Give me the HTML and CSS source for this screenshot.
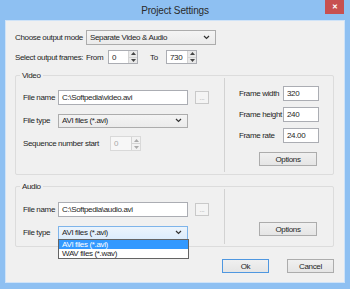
FILE: index.html
```html
<!DOCTYPE html>
<html lang="en">
<head>
    <meta charset="UTF-8">
    <title>Project Settings</title>
    <link rel="stylesheet" href="styles.css">
</head>
<body>
    <div class="window">
        <div class="titlebar">
            <span class="title">Project Settings</span>
            <span class="close">&#x2715;</span>
        </div>

        <div class="client">
            <div class="row mode-row">
                <span class="lbl lbl-main">Choose output mode</span>
                <div class="select mode-select">
                    <span>Separate Video &amp; Audio</span>
                    <svg class="chev" width="7" height="5" viewBox="0 0 7 5"><polyline points="1,1 3.5,3.5 6,1" fill="none" stroke="#333" stroke-width="1.2"/></svg>
                </div>
            </div>

            <div class="row frames-row">
                <span class="lbl lbl-main">Select output frames:</span>
                <span class="lbl lbl-from">From</span>
                <div class="spin">
                    <span class="spin-val">0</span>
                    <span class="spin-btns">
                        <span class="arrow"><svg width="5" height="3" viewBox="0 0 5 3"><polygon points="0,3 2.5,0 5,3" fill="#444"/></svg></span>
                        <span class="arrow"><svg width="5" height="3" viewBox="0 0 5 3"><polygon points="0,0 2.5,3 5,0" fill="#444"/></svg></span>
                    </span>
                </div>
                <span class="lbl lbl-to">To</span>
                <div class="spin">
                    <span class="spin-val">730</span>
                    <span class="spin-btns">
                        <span class="arrow"><svg width="5" height="3" viewBox="0 0 5 3"><polygon points="0,3 2.5,0 5,3" fill="#444"/></svg></span>
                        <span class="arrow"><svg width="5" height="3" viewBox="0 0 5 3"><polygon points="0,0 2.5,3 5,0" fill="#444"/></svg></span>
                    </span>
                </div>
            </div>

            <!-- Video group -->
            <div class="group video-group">
                <span class="group-title">Video</span>
                <div class="group-left">
                    <div class="row">
                        <span class="lbl lbl-file">File name</span>
                        <div class="field file-field">C:\Softpedia\video.avi</div>
                        <span class="browse">...</span>
                    </div>
                    <div class="row">
                        <span class="lbl lbl-file">File type</span>
                        <div class="select file-field">
                            <span>AVI files (*.avi)</span>
                            <svg class="chev" width="7" height="5" viewBox="0 0 7 5"><polyline points="1,1 3.5,3.5 6,1" fill="none" stroke="#333" stroke-width="1.2"/></svg>
                        </div>
                    </div>
                    <div class="row">
                        <span class="lbl lbl-seq">Sequence number start</span>
                        <div class="spin disabled">
                            <span class="spin-val">0</span>
                            <span class="spin-btns">
                                <span class="arrow"><svg width="5" height="3" viewBox="0 0 5 3"><polygon points="0,3 2.5,0 5,3" fill="#aaa"/></svg></span>
                                <span class="arrow"><svg width="5" height="3" viewBox="0 0 5 3"><polygon points="0,0 2.5,3 5,0" fill="#aaa"/></svg></span>
                            </span>
                        </div>
                    </div>
                </div>
                <div class="group-right">
                    <div class="row">
                        <span class="lbl lbl-frame">Frame width</span>
                        <div class="field num-field">320</div>
                    </div>
                    <div class="row">
                        <span class="lbl lbl-frame">Frame height</span>
                        <div class="field num-field">240</div>
                    </div>
                    <div class="row">
                        <span class="lbl lbl-frame">Frame rate</span>
                        <div class="field num-field">24.00</div>
                    </div>
                    <div class="btn options-btn">Options</div>
                </div>
            </div>

            <!-- Audio group -->
            <div class="group audio-group">
                <span class="group-title">Audio</span>
                <div class="group-left">
                    <div class="row">
                        <span class="lbl lbl-file">File name</span>
                        <div class="field file-field">C:\Softpedia\audio.avi</div>
                        <span class="browse">...</span>
                    </div>
                    <div class="row">
                        <span class="lbl lbl-file">File type</span>
                        <div class="select file-field focused">
                            <span>AVI files (*.avi)</span>
                            <svg class="chev" width="7" height="5" viewBox="0 0 7 5"><polyline points="1,1 3.5,3.5 6,1" fill="none" stroke="#333" stroke-width="1.2"/></svg>
                            <div class="droplist">
                                <div class="drop-item selected">AVI files (*.avi)</div>
                                <div class="drop-item">WAV files (*.wav)</div>
                            </div>
                        </div>
                    </div>
                </div>
                <div class="group-right">
                    <div class="btn options-btn">Options</div>
                </div>
            </div>

            <div class="actions">
                <div class="btn default-btn">Ok</div>
                <div class="btn">Cancel</div>
            </div>
        </div>
    </div>
</body>
</html>
```

FILE: styles.css
```css
* {
    box-sizing: border-box;
}
body {
    margin: 0;
    font-family: 'Liberation Sans', Arial, sans-serif;
    font-size: 8px;
    letter-spacing: -0.35px;
    color: #1e1e1e;
}
.window {
    width: 350px;
    height: 289px;
    background-color: #8ec0f2;
    padding: 0 5px 6px;
    display: flex;
    flex-direction: column;
}
.titlebar {
    height: 20px;
    display: flex;
    align-items: center;
    justify-content: center;
    position: relative;
}
.title {
    font-size: 10px;
    letter-spacing: -0.15px;
    color: #2a2a2a;
}
.close {
    position: absolute;
    right: 1px;
    top: 0;
    width: 19px;
    height: 14px;
    background-color: #c75050;
    color: #fff;
    font-size: 7px;
    font-weight: bold;
    display: flex;
    align-items: center;
    justify-content: center;
}
.client {
    flex: 1;
    background-color: #f0f0f0;
    border: 1px solid #cfe3f8;
    padding: 9px 10px 0 9px;
    display: flex;
    flex-direction: column;
}
.row {
    display: flex;
    align-items: center;
    height: 15px;
}
.lbl {
    white-space: nowrap;
    flex-shrink: 0;
}
.lbl-main { width: 71px; }
.lbl-from { width: 22px; }
.lbl-to { width: 16px; margin-left: 12px; }
.lbl-file { width: 35px; }
.lbl-seq { width: 87px; }
.lbl-frame { width: 44px; }

.frames-row {
    margin-top: 5px;
    height: 14px;
}

/* inputs */
.field {
    height: 15px;
    background-color: #fff;
    border: 1px solid #abadb3;
    padding: 0 3px;
    display: flex;
    align-items: center;
    white-space: nowrap;
}
.select {
    height: 14px;
    background: linear-gradient(#f4f4f4, #ebebeb);
    border: 1px solid #acacac;
    padding: 0 3px;
    display: flex;
    align-items: center;
    justify-content: space-between;
    position: relative;
    white-space: nowrap;
}
.select .chev {
    margin-right: 2px;
}
.select.focused {
    background: linear-gradient(#ecf4fc, #dcecfc);
    border-color: #7eb4ea;
}
.mode-select {
    width: 130px;
    height: 15px;
}
.file-field {
    width: 130px;
}
.num-field {
    width: 36px;
}
.browse {
    width: 14px;
    height: 13px;
    margin-left: 7px;
    background-color: #f4f4f4;
    border: 1px solid #c9c9c9;
    color: #b0b0b0;
    font-size: 7px;
    display: flex;
    align-items: flex-end;
    justify-content: center;
    padding-bottom: 2px;
    line-height: 1;
}

/* spinners */
.spin {
    width: 30px;
    height: 14px;
    display: flex;
    background-color: #fff;
    border: 1px solid #abadb3;
}
.frames-row .spin:last-child {
    width: 31px;
}
.spin-val {
    flex: 1;
    padding-left: 3px;
    display: flex;
    align-items: center;
}
.spin-btns {
    width: 9px;
    display: flex;
    flex-direction: column;
    border-left: 1px solid #d4d4d4;
}
.arrow {
    flex: 1;
    display: flex;
    align-items: center;
    justify-content: center;
    background-color: #e9e9e9;
}
.arrow + .arrow {
    border-top: 1px solid #d4d4d4;
}
.spin.disabled {
    width: 31px;
    height: 15px;
    background-color: #f7f7f7;
    border-color: #d9d9d9;
    color: #a8a8a8;
}
.spin.disabled .arrow {
    background-color: #f2f2f2;
}

/* group boxes */
.group {
    position: relative;
    display: grid;
    grid-template-columns: 209px 1fr;
    border: 1px solid #dcdcdc;
    border-radius: 2px;
}
.video-group {
    margin-top: 11px;
    height: 100px;
}
.audio-group {
    margin-top: 11px;
    height: 61px;
}
.group-title {
    position: absolute;
    top: -6px;
    left: 4px;
    padding: 0 2px;
    line-height: 11px;
    background-color: #f0f0f0;
}
.group-left {
    margin: 2px 0;
    padding-left: 7px;
    border-right: 1px solid #d2d2d2;
    display: flex;
    flex-direction: column;
    gap: 8px;
}
.video-group .group-left { padding-top: 12px; }
.audio-group .group-left { padding-top: 13px; }
.group-right {
    padding-left: 14px;
    display: flex;
    flex-direction: column;
    gap: 6px;
}
.video-group .group-right { padding-top: 10px; }
.audio-group .group-right { padding-top: 35px; }

/* buttons */
.btn {
    width: 47px;
    height: 14px;
    background: linear-gradient(#f0f0f0, #e5e5e5);
    border: 1px solid #acacac;
    display: flex;
    align-items: center;
    justify-content: center;
}
.options-btn {
    width: 58px;
    margin-left: 20px;
}
.video-group .options-btn {
    margin-top: 3px;
}
.default-btn {
    border-color: #4f97e0;
}
.actions {
    margin-top: 12px;
    display: flex;
    justify-content: flex-end;
    gap: 18px;
}

/* open dropdown list */
.droplist {
    position: absolute;
    top: 100%;
    left: -1px;
    width: 131px;
    background-color: #fff;
    border: 1px solid #646464;
    z-index: 2;
}
.drop-item {
    height: 9px;
    line-height: 9px;
    padding-left: 3px;
}
.drop-item.selected {
    background-color: #3399ff;
    color: #fff;
}
```
